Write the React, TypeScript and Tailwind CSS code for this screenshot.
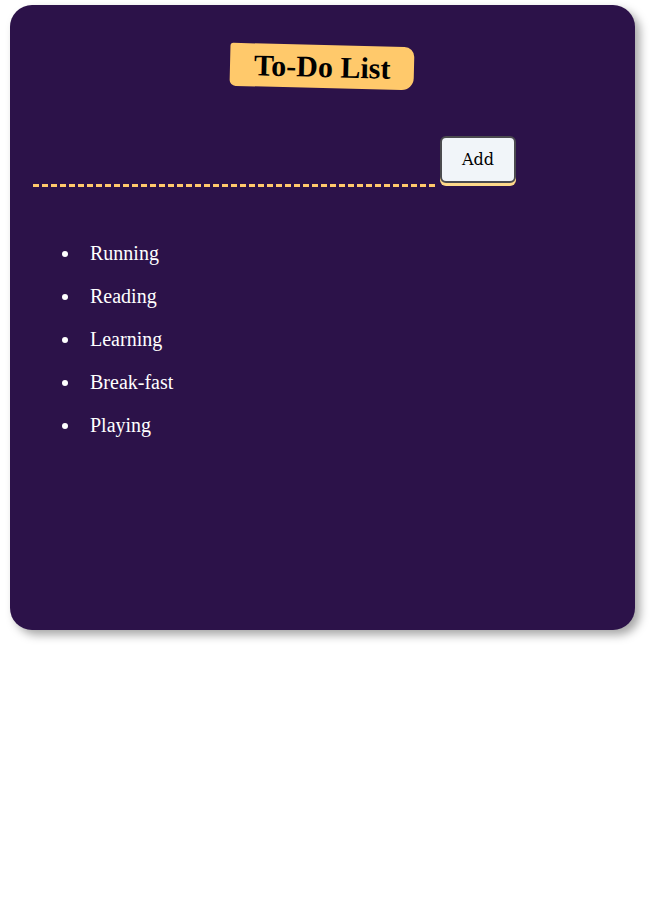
import React from "react";

export default function App() {
  const items = ["Running", "Reading", "Learning", "Break-fast", "Playing"];
  return (
    <div className="w-[656px] h-[901px] bg-white pt-[5px] pl-[10px]" style={{ fontFamily: '"Liberation Serif", serif' }}>
      <div className="w-[625px] h-[625px] rounded-[22px] bg-[#2c1249] shadow-[5px_5px_10px_rgba(0,0,0,0.35)] flex flex-col">
        <div className="flex justify-center pt-[40px]">
          <div className="rotate-[1.4deg] bg-[#ffc96b] rounded-[3px_10px_12px_6px] px-[24px] h-[43px] flex items-center">
            <h1 className="text-[30px] font-bold text-black leading-none">To-Do List</h1>
          </div>
        </div>
        <div className="flex items-end pl-[23px] mt-[48px]">
          <div className="w-[402px] h-[31px] mb-[-1px] border-b-[3px] border-dashed border-[#ffc96b]" />
          <button
            className="ml-[5px] mb-[3px] w-[76px] h-[47px] rounded-[6px] bg-[#f1f5f9] border-2 border-[#4b4b4f] shadow-[0_3px_0_#ffd98a] text-[16px] text-black"
            style={{ fontFamily: '"DejaVu Serif", serif' }}
          >
            Add
          </button>
        </div>
        <ul className="pl-[52px] pt-[56px] text-white text-[20px] leading-[22px] flex flex-col gap-[21px]">
          {items.map((t) => (
            <li key={t} className="flex items-center">
              <span className="w-[6px] h-[6px] rounded-full bg-white mr-[22px] mt-[2px]" />
              <span>{t}</span>
            </li>
          ))}
        </ul>
      </div>
    </div>
  );
}
